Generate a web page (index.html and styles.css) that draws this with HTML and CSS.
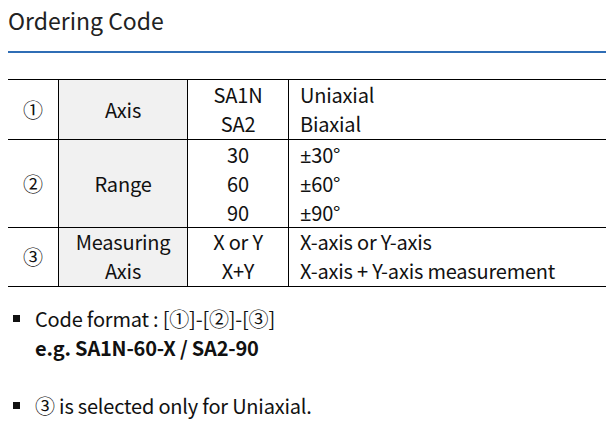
FILE: index.html
```html
<!DOCTYPE html>
<html>
<head>
<meta charset="utf-8">
<link rel="stylesheet" href="styles.css">
</head>
<body>
<div class="page">
  <h2 class="title">Ordering Code</h2>
  <table class="code-table">
    <tr>
      <td class="num">①</td>
      <td class="label">Axis</td>
      <td class="code">SA1N<br>SA2</td>
      <td class="desc">Uniaxial<br>Biaxial</td>
    </tr>
    <tr>
      <td class="num">②</td>
      <td class="label">Range</td>
      <td class="code">30<br>60<br>90</td>
      <td class="desc"><span class="pm">±</span>30°<br><span class="pm">±</span>60°<br><span class="pm">±</span>90°</td>
    </tr>
    <tr class="last">
      <td class="num">③</td>
      <td class="label">Measuring<br>Axis</td>
      <td class="code">X or Y<br>X+Y</td>
      <td class="desc">X-axis or Y-axis<br>X-axis + Y-axis measurement</td>
    </tr>
  </table>
  <ul class="notes">
    <li>Code format : [①]-[②]-[③]<br><b>e.g. SA1N-60-X / SA2-90</b></li>
    <li>③ is selected only for Uniaxial.</li>
  </ul>
</div>
</body>
</html>
```
FILE: styles.css
```css
html, body {
  margin: 0;
  padding: 0;
  background: #fff;
}
body {
  font-family: "Noto Sans CJK KR", "Noto Sans", sans-serif;
  color: #111;
}
.page {
  padding: 0 8px;
}
.title {
  margin: 0;
  padding-top: 4px;
  font-size: 23px;
  font-weight: 400;
  line-height: 32px;
  color: #222;
  padding-bottom: 15px;
  border-bottom: 2px solid #2f6db5;
}
.code-table {
  margin-top: 26px;
  width: 100%;
  border-collapse: collapse;
  font-size: 20px;
  line-height: 29.3px;
  letter-spacing: -0.2px;
  border-top: 1px solid #000;
}
.code-table td {
  padding: 0;
  border-bottom: 1px solid #000;
  vertical-align: middle;
}
.code-table .last td {
  line-height: 28.6px;
}
.code-table td + td {
  border-left: 1px solid #000;
}
.num {
  width: 50px;
  text-align: center;
}
.label {
  width: 128px;
  text-align: center;
  background: #f1f1f1;
}
.code {
  width: 100px;
  text-align: center;
}
.desc {
  padding-left: 11px !important;
  text-align: left;
}
.pm {
  font-family: "Noto Sans", sans-serif;
  font-size: 20px;
  line-height: 0;
}
.notes {
  margin: 17px 0 0;
  padding: 0;
  list-style: none;
  font-size: 20px;
  line-height: 29px;
  letter-spacing: -0.2px;
}
.notes li {
  position: relative;
  padding-left: 27px;
  margin-bottom: 29px;
}
.notes li:last-child {
  margin-bottom: 0;
}
.notes li::before {
  content: "";
  position: absolute;
  left: 5px;
  top: 11px;
  width: 7px;
  height: 7px;
  background: #111;
}
.notes b {
  font-weight: 700;
}
```
